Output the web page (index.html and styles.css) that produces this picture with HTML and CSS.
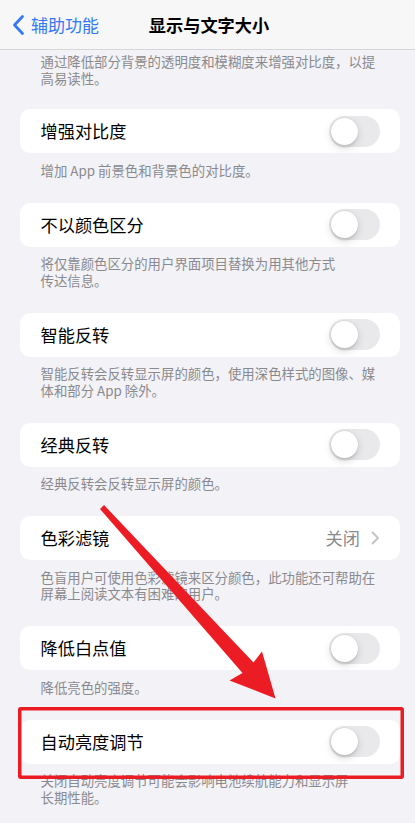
FILE: index.html
```html
<!DOCTYPE html>
<html lang="zh-CN">
<head>
<meta charset="utf-8">
<title>显示与文字大小</title>
<link rel="stylesheet" href="styles.css">
</head>
<body>
<div class="screen">
  <header class="nav">
    <div class="back">
      <svg class="back-chev" width="14" height="22" viewBox="0 0 14 22"><path d="M11.5 2.5 L3.5 11 L11.5 19.5" fill="none" stroke="#3478f6" stroke-width="2.8" stroke-linecap="round" stroke-linejoin="round"/></svg>
      <span>辅助功能</span>
    </div>
    <div class="title">显示与文字大小</div>
    <div></div>
  </header>

  <main class="content">
    <p class="footer top-footer">通过降低部分背景的透明度和模糊度来增强对比度，以提<br>高易读性。</p>

    <section class="group">
      <div class="card"><span class="label">增强对比度</span><span class="switch"><span class="knob"></span></span></div>
      <p class="footer">增加 App 前景色和背景色的对比度。</p>
    </section>

    <section class="group">
      <div class="card"><span class="label">不以颜色区分</span><span class="switch"><span class="knob"></span></span></div>
      <p class="footer">将仅靠颜色区分的用户界面项目替换为用其他方式<br>传达信息。</p>
    </section>

    <section class="group">
      <div class="card"><span class="label">智能反转</span><span class="switch"><span class="knob"></span></span></div>
      <p class="footer">智能反转会反转显示屏的颜色，使用深色样式的图像、媒<br>体和部分 App 除外。</p>
    </section>

    <section class="group">
      <div class="card"><span class="label">经典反转</span><span class="switch"><span class="knob"></span></span></div>
      <p class="footer">经典反转会反转显示屏的颜色。</p>
    </section>

    <section class="group">
      <div class="card"><span class="label">色彩滤镜</span><span class="detail">关闭<svg class="chev" width="9" height="14" viewBox="0 0 9 14"><path d="M1.5 1.5 L7 7 L1.5 12.5" fill="none" stroke="#c4c4c7" stroke-width="2" stroke-linecap="round" stroke-linejoin="round"/></svg></span></div>
      <p class="footer">色盲用户可使用色彩滤镜来区分颜色，此功能还可帮助在<br>屏幕上阅读文本有困难的用户。</p>
    </section>

    <section class="group">
      <div class="card"><span class="label">降低白点值</span><span class="switch"><span class="knob"></span></span></div>
      <p class="footer">降低亮色的强度。</p>
    </section>

    <section class="group">
      <div class="card"><span class="label">自动亮度调节</span><span class="switch"><span class="knob"></span></span></div>
      <p class="footer">关闭自动亮度调节可能会影响电池续航能力和显示屏<br>长期性能。</p>
    </section>
  </main>

  <svg class="annotation" width="415" height="823" viewBox="0 0 415 823">
    <path d="M100 509 L104 505 L253.5 662.5 L262 651.5 L275.5 698.5 L229.5 680.5 L242.5 673 Z" fill="#ec1c24"/>
    <rect x="19.75" y="708.75" width="382.5" height="68.5" fill="none" stroke="#ec1c24" stroke-width="3.5" rx="1"/>
  </svg>
</div>
</body>
</html>
```

FILE: styles.css
```css
html, body {
  margin: 0;
  padding: 0;
}

body {
  background: #f2f2f7;
  font-family: "Noto Sans CJK SC", "Noto Sans", sans-serif;
  color: #000;
}

.screen {
  position: relative;
  width: 415px;
  height: 823px;
  overflow: hidden;
  background: #f2f2f7;
}

.nav {
  height: 49px;
  border-bottom: 1px solid #d6d6d9;
  background: #f7f7f8;
  display: grid;
  grid-template-columns: 1fr auto 1fr;
  align-items: center;
}

.back {
  display: flex;
  align-items: center;
  gap: 6px;
  padding-left: 11px;
  color: #3478f6;
  font-size: 17px;
  line-height: 22px;
}

.back-chev {
  display: block;
}

.title {
  font-size: 17.2px;
  font-weight: 600;
  line-height: 22px;
  padding-left: 3px;
}

.content {
  padding: 0 15px 0 20px;
}

.footer {
  margin: 0;
  padding: 8.5px 0 0 20.5px;
  font-size: 13.4px;
  line-height: 16.5px;
  color: #8a8a8e;
  white-space: nowrap;
}

.top-footer {
  padding-top: 3px;
  margin-bottom: 23px;
}

.group {
  margin-bottom: 24.5px;
}

.card {
  height: 44px;
  width: 380px;
  box-sizing: border-box;
  background: #fff;
  border-radius: 10px;
  display: flex;
  align-items: center;
  justify-content: space-between;
  padding: 0 20px 0 20.5px;
}

.label {
  font-size: 17.2px;
  line-height: 22px;
}

.switch {
  position: relative;
  width: 51px;
  height: 31px;
  border-radius: 16px;
  background: #e9e9eb;
  flex: none;
}

.knob {
  position: absolute;
  left: 2px;
  top: 2px;
  width: 27px;
  height: 27px;
  border-radius: 50%;
  background: #fff;
  box-shadow: 0 0 0 0.5px rgba(0, 0, 0, 0.06), 0 3px 8px rgba(0, 0, 0, 0.15), 0 3px 1px rgba(0, 0, 0, 0.06);
}

.detail {
  display: flex;
  align-items: center;
  gap: 11px;
  font-size: 17.2px;
  line-height: 22px;
  color: #8a8a8e;
}

.chev {
  display: block;
}

.annotation {
  position: absolute;
  left: 0;
  top: 0;
  pointer-events: none;
}
```
